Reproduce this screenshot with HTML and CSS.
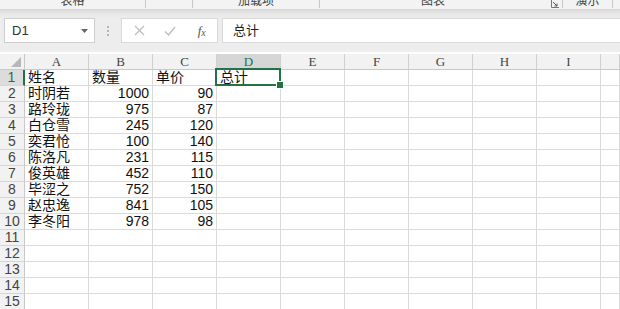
FILE: index.html
```
<!DOCTYPE html>
<html lang="zh">
<head>
<meta charset="utf-8">
<link rel="stylesheet" href="styles.css">
</head>
<body>
<div class="app">
  <div class="ribbon">
    <div class="grp g1"><span class="lbl">表格</span></div>
    <div class="grp g2"></div>
    <div class="grp g3"><span class="lbl">加载项</span></div>
    <div class="grp g4"><span class="lbl">图表</span>
      <svg class="launch" width="8" height="8" viewBox="0 0 8 8"><path d="M0.5 0v7.5H8" fill="none" stroke="#777" stroke-width="1"/><path d="M2 2l4 4M6 3.5V6H3.5" fill="none" stroke="#555" stroke-width="1"/></svg>
    </div>
    <div class="grp g5"><span class="lbl">演示</span></div>
    <div class="grp g6"></div>
  </div>
  <div class="fbar">
    <div class="namebox"><span>D1</span>
      <svg class="arrow" width="7" height="4" viewBox="0 0 7 4"><path d="M0 0h7L3.5 4z" fill="#666"/></svg>
    </div>
    <div class="grip"><i></i><i></i><i></i></div>
    <div class="fbtns">
      <span class="fb"><svg width="11" height="11" viewBox="0 0 11 11"><path d="M1 1l9 9M10 1l-9 9" stroke="#bdbdbd" stroke-width="1.2" fill="none"/></svg></span>
      <span class="fb"><svg width="12" height="10" viewBox="0 0 12 10"><path d="M1 5.5l3.5 3.5L11 1" stroke="#bdbdbd" stroke-width="1.3" fill="none"/></svg></span>
      <span class="fb fx"><i>f</i><i class="x">x</i></span>
    </div>
    <div class="finput">总计</div>
  </div>
  <div class="sheet">
    <div class="hd corner"><svg width="10" height="10" viewBox="0 0 10 10"><path d="M10 0v10H0z" fill="#b7b7b7"/></svg></div>
    <div class="hd col">A</div><div class="hd col">B</div><div class="hd col">C</div><div class="hd col sel">D</div><div class="hd col">E</div><div class="hd col">F</div><div class="hd col">G</div><div class="hd col">H</div><div class="hd col">I</div><div class="hd col"></div>

    <div class="rh selr">1</div><div class="c">姓名</div><div class="c">数量</div><div class="c">单价</div><div class="c active">总计</div><div class="c"></div><div class="c"></div><div class="c"></div><div class="c"></div><div class="c"></div><div class="c"></div>
    <div class="rh">2</div><div class="c">时阴若</div><div class="c n">1000</div><div class="c n">90</div><div class="c"></div><div class="c"></div><div class="c"></div><div class="c"></div><div class="c"></div><div class="c"></div><div class="c"></div>
    <div class="rh">3</div><div class="c">路玲珑</div><div class="c n">975</div><div class="c n">87</div><div class="c"></div><div class="c"></div><div class="c"></div><div class="c"></div><div class="c"></div><div class="c"></div><div class="c"></div>
    <div class="rh">4</div><div class="c">白仓雪</div><div class="c n">245</div><div class="c n">120</div><div class="c"></div><div class="c"></div><div class="c"></div><div class="c"></div><div class="c"></div><div class="c"></div><div class="c"></div>
    <div class="rh">5</div><div class="c">奕君怆</div><div class="c n">100</div><div class="c n">140</div><div class="c"></div><div class="c"></div><div class="c"></div><div class="c"></div><div class="c"></div><div class="c"></div><div class="c"></div>
    <div class="rh">6</div><div class="c">陈洛凡</div><div class="c n">231</div><div class="c n">115</div><div class="c"></div><div class="c"></div><div class="c"></div><div class="c"></div><div class="c"></div><div class="c"></div><div class="c"></div>
    <div class="rh">7</div><div class="c">俊英雄</div><div class="c n">452</div><div class="c n">110</div><div class="c"></div><div class="c"></div><div class="c"></div><div class="c"></div><div class="c"></div><div class="c"></div><div class="c"></div>
    <div class="rh">8</div><div class="c">毕涩之</div><div class="c n">752</div><div class="c n">150</div><div class="c"></div><div class="c"></div><div class="c"></div><div class="c"></div><div class="c"></div><div class="c"></div><div class="c"></div>
    <div class="rh">9</div><div class="c">赵忠逸</div><div class="c n">841</div><div class="c n">105</div><div class="c"></div><div class="c"></div><div class="c"></div><div class="c"></div><div class="c"></div><div class="c"></div><div class="c"></div>
    <div class="rh">10</div><div class="c">李冬阳</div><div class="c n">978</div><div class="c n">98</div><div class="c"></div><div class="c"></div><div class="c"></div><div class="c"></div><div class="c"></div><div class="c"></div><div class="c"></div>
    <div class="rh">11</div><div class="c"></div><div class="c"></div><div class="c"></div><div class="c"></div><div class="c"></div><div class="c"></div><div class="c"></div><div class="c"></div><div class="c"></div><div class="c"></div>
    <div class="rh">12</div><div class="c"></div><div class="c"></div><div class="c"></div><div class="c"></div><div class="c"></div><div class="c"></div><div class="c"></div><div class="c"></div><div class="c"></div><div class="c"></div>
    <div class="rh">13</div><div class="c"></div><div class="c"></div><div class="c"></div><div class="c"></div><div class="c"></div><div class="c"></div><div class="c"></div><div class="c"></div><div class="c"></div><div class="c"></div>
    <div class="rh">14</div><div class="c"></div><div class="c"></div><div class="c"></div><div class="c"></div><div class="c"></div><div class="c"></div><div class="c"></div><div class="c"></div><div class="c"></div><div class="c"></div>
    <div class="rh">15</div><div class="c"></div><div class="c"></div><div class="c"></div><div class="c"></div><div class="c"></div><div class="c"></div><div class="c"></div><div class="c"></div><div class="c"></div><div class="c"></div>
  </div>
</div>
</body>
</html>
```
FILE: styles.css
```
* { box-sizing: border-box; }
html, body { margin: 0; padding: 0; }
body {
  width: 620px;
  height: 309px;
  overflow: hidden;
  background: #fff;
  font-family: "Liberation Sans", "Noto Sans CJK SC", sans-serif;
}
.app { width: 620px; height: 309px; overflow: hidden; }

.ribbon {
  display: flex;
  height: 10px;
  background: #f3f3f3;
  border-bottom: 1px solid #d6d6d6;
  overflow: hidden;
}
.grp {
  position: relative;
  display: flex;
  justify-content: center;
  border-right: 1px solid #c9c9c9;
  height: 8px;
}
.g1 { width: 146px; }
.g2 { width: 47px; }
.g3 { width: 127px; }
.g4 { width: 243px; }
.g5 { width: 50px; }
.g6 { flex: 1; border-right: 0; }
.lbl {
  font-size: 12px;
  line-height: 12px;
  color: #444;
  margin-top: -6px;
  font-family: "Noto Sans CJK SC", sans-serif;
}
.g4 .lbl { margin-left: -16px; }
.launch { position: absolute; right: 3px; top: 0; }

.fbar {
  display: flex;
  align-items: flex-start;
  height: 42px;
  padding-top: 8px;
  background: linear-gradient(#dedede 0, #e9e9e9 5px, #ededed 9px, #ededed 100%);
}
.namebox {
  margin-left: 4px;
  width: 91px;
  height: 25px;
  background: #fff;
  border: 1px solid #cfcfcf;
  display: flex;
  align-items: center;
  justify-content: space-between;
  padding: 0 6px 0 7px;
  font-size: 13px;
  color: #333;
}
.arrow { margin-top: 1px; }
.grip {
  width: 26px;
  height: 25px;
  display: flex;
  flex-direction: column;
  align-items: center;
  justify-content: center;
  gap: 2px;
}
.grip i {
  display: block;
  width: 2px;
  height: 2px;
  background: #b5b5b5;
}
.fbtns {
  width: 97px;
  height: 25px;
  background: #fff;
  border: 1px solid #d9d9d9;
  display: flex;
  align-items: center;
  padding-left: 2px;
}
.fb {
  width: 31px;
  display: flex;
  justify-content: center;
  align-items: center;
}
.fx {
  font-family: "Liberation Serif", serif;
  font-size: 13px;
  color: #555;
  margin-left: 1px;
}
.fx .x { font-size: 10px; margin-top: 3px; }
.finput {
  margin-left: 4px;
  flex: 1;
  height: 25px;
  background: #fff;
  border: 1px solid #d9d9d9;
  border-right: 0;
  padding-left: 10px;
  font-size: 13px;
  line-height: 22px;
  color: #222;
  font-family: "Noto Sans CJK SC", sans-serif;
}

.sheet {
  margin-top: 2px;
  display: grid;
  grid-template-columns: 25px repeat(9, 64px) 1fr;
  grid-auto-rows: 16px;
}
.hd {
  background: #f2f2f2;
  border-right: 1px solid #d0d0d0;
  border-bottom: 1px solid #c8c8c8;
  font-family: "Liberation Serif", "DejaVu Serif", serif;
  font-size: 13px;
  line-height: 15px;
  color: #444;
  text-align: center;
}
.corner {
  display: flex;
  align-items: flex-end;
  justify-content: flex-end;
  padding: 0 3px 2px 0;
  border-right-color: #c8c8c8;
}
.hd.sel {
  background: #d6d6d6;
  color: #217346;
  border-bottom: 2px solid #217346;
}
.rh {
  background: #f2f2f2;
  border-right: 1px solid #c8c8c8;
  border-bottom: 1px solid #d6d6d6;
  font-size: 14px;
  line-height: 15px;
  color: #444;
  text-align: center;
}
.rh.selr {
  background: #dcdcdc;
  color: #217346;
  border-right: 2px solid #217346;
}
.c {
  border-right: 1px solid #dadada;
  border-bottom: 1px solid #dadada;
  font-size: 14px;
  line-height: 15px;
  padding: 0 3px;
  color: #111;
  white-space: nowrap;
  overflow: visible;
}
.c.n { text-align: right; }
.c.active { position: relative; }
.c.active::before {
  content: "";
  position: absolute;
  left: -2px;
  top: -2px;
  right: -1px;
  bottom: -1px;
  border: 2px solid #217346;
}
.c.active::after {
  content: "";
  position: absolute;
  right: -4px;
  bottom: -4px;
  width: 6px;
  height: 6px;
  background: #217346;
  border: 1px solid #fff;
}
```
